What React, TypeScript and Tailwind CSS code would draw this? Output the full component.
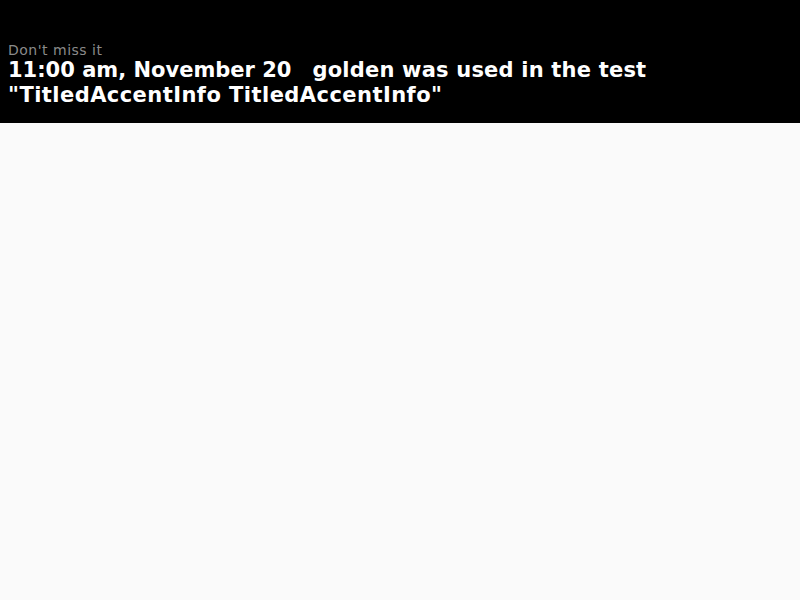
export default function App() {
  return (
    <div className="min-h-screen bg-[#fafafa]" style={{ fontFamily: '"DejaVu Sans", sans-serif' }}>
      <header className="bg-black px-2 pb-[15px] pt-[42px] text-white">
        <p className="text-[14px] leading-[16px] tracking-[0.5px] text-[#8a8a8a]">Don&apos;t miss it</p>
        <h1 className="text-[21px] font-bold leading-[25px] tracking-[0.45px]">
          <span className="tracking-normal">11:00 am, November 20</span>
          <span className="ml-[21px] tracking-[0.2px]">golden was used in the test</span>
          <br />
          "TitledAccentInfo TitledAccentInfo"
        </h1>
      </header>
    </div>
  );
}
